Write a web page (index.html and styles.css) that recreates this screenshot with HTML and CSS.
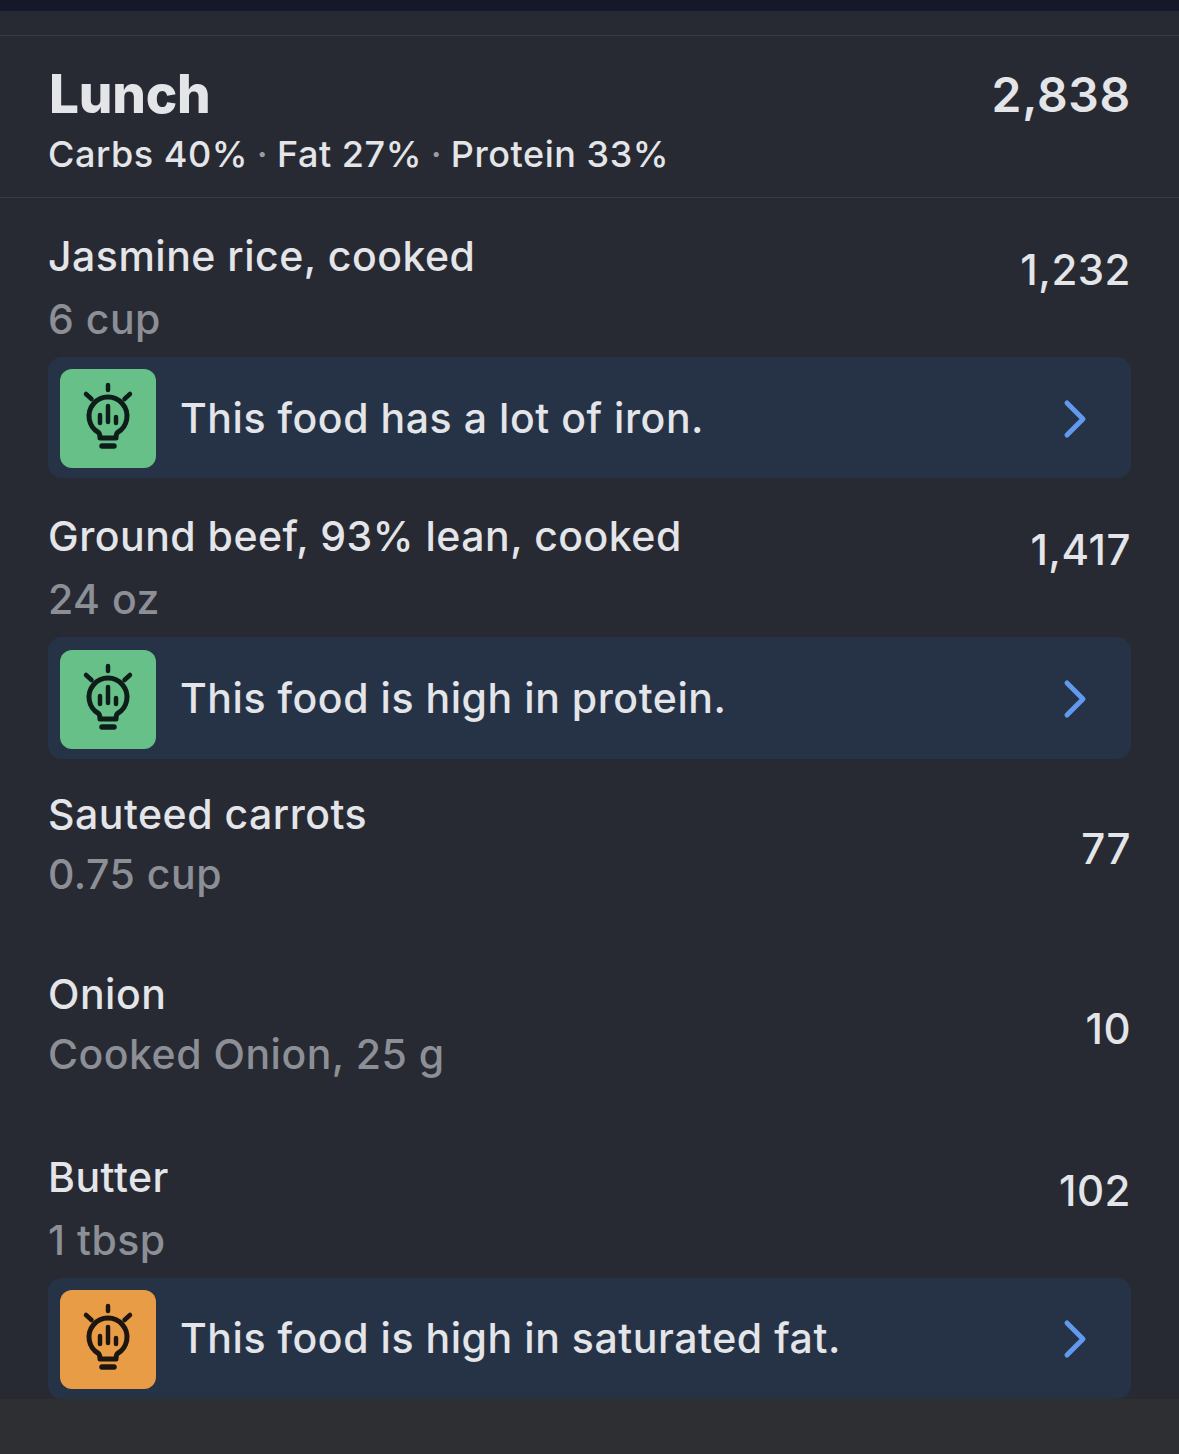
FILE: index.html
```html
<!DOCTYPE html>
<html lang="en">
<head>
    <meta charset="UTF-8">
    <title>Lunch</title>
    <link rel="stylesheet" href="styles.css">
</head>
<body>
    <svg width="0" height="0" class="defs">
        <symbol id="bulb" viewBox="0 0 96 99">
            <g fill="none" stroke="currentColor" stroke-linecap="round" stroke-linejoin="round">
                <path stroke-width="4.500" d="M48 16v5M26 25l5.500 5M70 25l-5.500 5"/>
                <path stroke-width="5" d="M38.500 63.500A19 19 0 1 1 57.500 63.500C56 65 56 67 56 69H40C40 67 40 65 38.500 63.500Z"/>
                <path stroke-width="4.500" d="M48 37v16M40 46v8M56 48v6"/>
                <path stroke-width="5.500" d="M42 77h12"/>
            </g>
        </symbol>
        <symbol id="chevron" viewBox="0 0 24 40">
            <path d="M4 4l16 16L4 36" fill="none" stroke="currentColor" stroke-width="5" stroke-linecap="round" stroke-linejoin="round"/>
        </symbol>
    </svg>

    <div class="topbar"></div>
    <div class="band"></div>

    <header class="meal">
        <div class="meal-info">
            <h1>Lunch</h1>
            <p>Carbs 40% <span class="dot">·</span> Fat 27% <span class="dot">·</span> Protein 33%</p>
        </div>
        <div class="meal-total">2,838</div>
    </header>

    <section class="food">
        <div class="food-head">
            <div>
                <div class="food-name">Jasmine rice, cooked</div>
                <div class="food-qty">6 cup</div>
            </div>
            <div class="food-cal">1,232</div>
        </div>
        <div class="tip">
            <span class="tip-icon green"><svg><use href="#bulb"/></svg></span>
            <span class="tip-text">This food has a lot of iron.</span>
            <svg class="tip-arrow"><use href="#chevron"/></svg>
        </div>
    </section>

    <section class="food">
        <div class="food-head">
            <div>
                <div class="food-name">Ground beef, 93% lean, cooked</div>
                <div class="food-qty">24 oz</div>
            </div>
            <div class="food-cal">1,417</div>
        </div>
        <div class="tip">
            <span class="tip-icon green"><svg><use href="#bulb"/></svg></span>
            <span class="tip-text">This food is high in protein.</span>
            <svg class="tip-arrow"><use href="#chevron"/></svg>
        </div>
    </section>

    <section class="food plain">
        <div class="food-info">
            <div class="food-name">Sauteed carrots</div>
            <div class="food-qty">0.75 cup</div>
        </div>
        <div class="food-cal">77</div>
    </section>

    <section class="food plain">
        <div class="food-info">
            <div class="food-name">Onion</div>
            <div class="food-qty">Cooked Onion, 25 g</div>
        </div>
        <div class="food-cal">10</div>
    </section>

    <section class="food">
        <div class="food-head">
            <div>
                <div class="food-name">Butter</div>
                <div class="food-qty">1 tbsp</div>
            </div>
            <div class="food-cal">102</div>
        </div>
        <div class="tip">
            <span class="tip-icon orange"><svg><use href="#bulb"/></svg></span>
            <span class="tip-text">This food is high in saturated fat.</span>
            <svg class="tip-arrow"><use href="#chevron"/></svg>
        </div>
    </section>

    <div class="bottombar"></div>
</body>
</html>
```

FILE: styles.css
```css
html, body {
    margin: 0;
    height: 1454px;
    overflow: hidden;
}
body {
    font-family: Inter, "Noto Sans", sans-serif;
    background-color: #272a33;
    color: #e4e5e8;
}
.defs {
    display: none;
}
.topbar {
    height: 11px;
    background-color: #151829;
}
.band {
    height: 24px;
    border-bottom: 1px solid #3a3d46;
}
.meal {
    display: flex;
    justify-content: space-between;
    height: 161px;
    padding: 0 49px;
    border-bottom: 1px solid #3a3d46;
}
.meal h1 {
    margin: 29px 0 0;
    font-size: 53px;
    line-height: 58px;
    font-weight: 800;
    letter-spacing: -0.2px;
}
.meal p {
    margin: 8px 0 0 -1px;
    font-size: 36px;
    line-height: 46px;
    font-weight: 500;
    letter-spacing: 0.55px;
}
.dot {
    margin: 0 -1.5px;
    color: #9a9ca3;
}
.meal-total {
    margin: 30px -1px 0 0;
    font-size: 48px;
    line-height: 58px;
    font-weight: 600;
    letter-spacing: 0.7px;
}
.food {
    padding: 0 48px;
}
.food-head {
    display: flex;
    justify-content: space-between;
    height: 159px;
}
.food-name {
    padding-top: 33px;
    font-size: 41px;
    line-height: 50px;
    font-weight: 550;
    letter-spacing: 0.5px;
}
.food-qty {
    margin-top: 13px;
    font-size: 41px;
    line-height: 50px;
    font-weight: 550;
    letter-spacing: 0.5px;
    color: #8d8f96;
}
.food-cal {
    height: 144px;
    line-height: 144px;
    font-size: 42px;
    font-weight: 550;
    letter-spacing: 0.5px;
}
.plain {
    display: flex;
    justify-content: space-between;
    align-items: center;
    height: 180px;
}
.food-info {
    margin-bottom: 10px;
}
.plain .food-name {
    padding-top: 0;
}
.plain .food-qty {
    margin-top: 10px;
}
.plain .food-cal {
    height: auto;
    line-height: 50px;
}
.tip {
    display: flex;
    align-items: center;
    box-sizing: border-box;
    height: 121.4px;
    padding: 2px 44px 0 12px;
    border-radius: 14px;
    background-color: #263347;
}
.tip-icon {
    width: 96px;
    height: 99px;
    border-radius: 12px;
    color: #0f1d1a;
}
.tip-icon svg {
    display: block;
    width: 96px;
    height: 99px;
}
.green {
    background-color: #67c088;
}
.orange {
    background-color: #e89c45;
    color: #1d1510;
}
.tip-text {
    flex: 1;
    margin-left: 24px;
    padding-bottom: 2px;
    font-size: 41px;
    font-weight: 550;
    letter-spacing: 0.55px;
}
.tip-arrow {
    width: 24px;
    height: 40px;
    color: #6199ee;
}
.bottombar {
    position: absolute;
    left: 0;
    right: 0;
    top: 1399px;
    height: 55px;
    background-color: #2e2f33;
}
```
